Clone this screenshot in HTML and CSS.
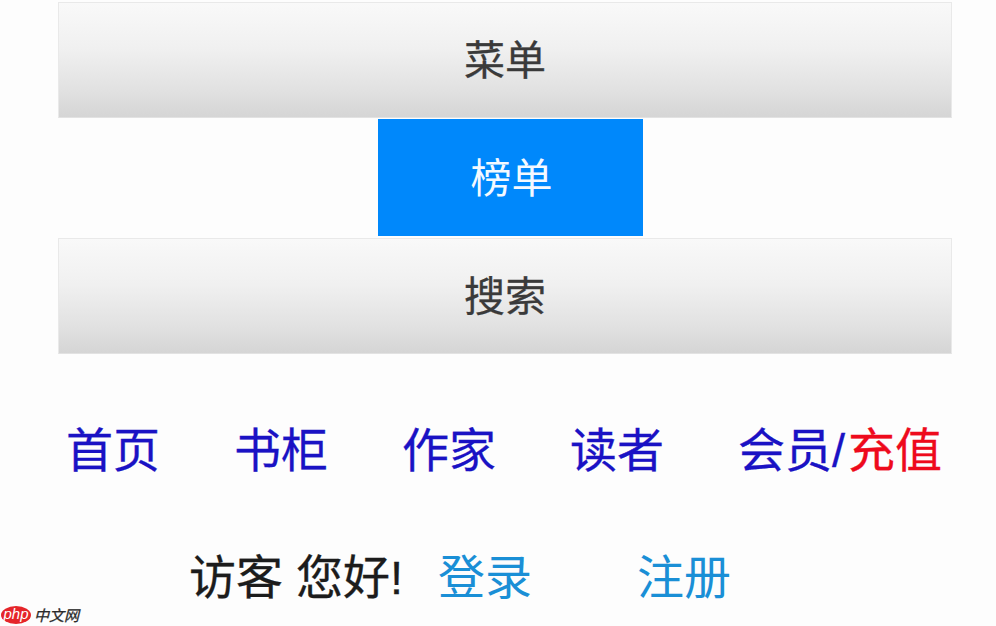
FILE: index.html
```html
<!DOCTYPE html>
<html lang="zh-CN">
  <head>
    <meta charset="UTF-8" />
    <title>菜单</title>
    <link rel="stylesheet" href="styles.css">
  </head>
  <body>
    <div class="bar bar-first">菜单</div>
    <div class="tab">榜单</div>
    <div class="bar">搜索</div>

    <div class="nav">
      <a class="nav-link">首页</a>
      <a class="nav-link">书柜</a>
      <a class="nav-link">作家</a>
      <a class="nav-link">读者</a>
      <a class="nav-link">会员/<span class="red">充值</span></a>
    </div>

    <div class="user">
      <span class="hello">访客 您好!</span>
      <a class="login">登录</a>
      <a class="signup">注册</a>
    </div>

    <!-- Watermark -->
    <div class="mark">
      <span class="mark-logo">php</span>
      <span class="mark-text">中文网</span>
    </div>
  </body>
</html>
```

FILE: styles.css
```css
html,
body {
  height: 100%;
}
body {
  margin: 0;
  padding-top: 2px;
  box-sizing: border-box;
  width: 996px;
  height: 626px;
  overflow: hidden;
  position: relative;
  background: #fdfdfd;
  font-family: "Liberation Sans", "Noto Sans CJK SC", sans-serif;
}
.bar {
  display: flex;
  justify-content: center;
  align-items: center;
  box-sizing: border-box;
  width: 894px;
  height: 116px;
  margin-left: 58px;
  padding-bottom: 6px;
  border: 1px solid #e9e9e9;
  border-bottom-color: #e2e2e2;
  background: linear-gradient(#f9f9f9 0%, #f0f0f0 40%, #e2e2e2 75%, #d5d5d5 100%);
  color: #3a3a3a;
  font-size: 41px;
  -webkit-text-stroke: 0.3px #3a3a3a;
}
.tab {
  display: flex;
  justify-content: center;
  align-items: center;
  box-sizing: border-box;
  width: 265px;
  height: 117px;
  margin: 1px 0 2px 378px;
  padding: 0 0 6px 2px;
  background: #0088fb;
  color: #f4f9ff;
  font-size: 41px;
}
.nav {
  display: flex;
  margin: 74px 0 0 66px;
  height: 46px;
  align-items: center;
  color: #1a12c4;
  font-size: 47px;
  line-height: 46px;
  -webkit-text-stroke: 0.3px #1a12c4;
}
.nav-link {
  width: 168px;
  white-space: nowrap;
}
.red {
  margin-left: 3px;
  color: #ee0a1c;
  -webkit-text-stroke: 0.3px #ee0a1c;
}
.user {
  display: flex;
  align-items: center;
  margin: 81px 0 0 189px;
  height: 46px;
  font-size: 47px;
  line-height: 46px;
  white-space: nowrap;
}
.hello {
  width: 249px;
  color: #1c1c1c;
  -webkit-text-stroke: 0.3px #1c1c1c;
}
.login {
  width: 199px;
  color: #1a8fd6;
}
.signup {
  color: #1a8fd6;
}
.mark {
  position: absolute;
  left: 1px;
  bottom: 1px;
  display: flex;
  align-items: center;
  gap: 3px;
}
.mark-logo {
  display: block;
  width: 30px;
  height: 18px;
  border-radius: 50%;
  background: #e5252a;
  color: #fff;
  font-size: 15px;
  font-style: italic;
  line-height: 15px;
  text-align: center;
}
.mark-text {
  color: #2a2a2a;
  font-size: 15px;
  font-style: italic;
  -webkit-text-stroke: 0.3px #2a2a2a;
}
```
